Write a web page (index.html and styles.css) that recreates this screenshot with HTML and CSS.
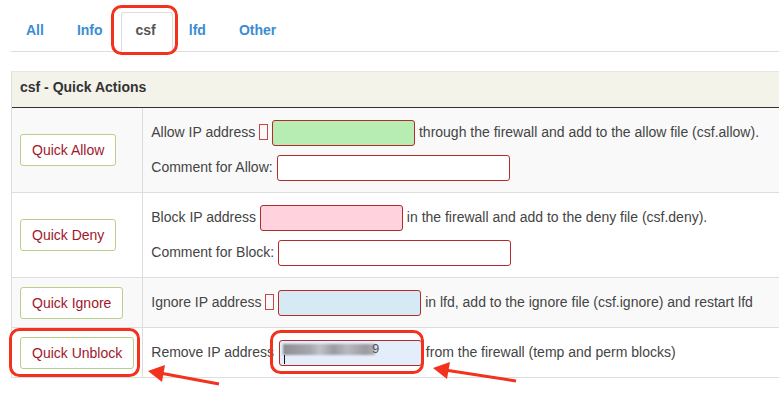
FILE: index.html
```html
<!DOCTYPE html>
<html lang="en">
<head>
	<meta charset="UTF-8"/>
	<title>csf - Quick Actions</title>
	<link rel="stylesheet" href="styles.css">
</head>
<body>
	<!-- Tab bar -->
	<ul class="tabs">
		<li><a href="#">All</a></li>
		<li><a href="#">Info</a></li>
		<li class="active"><a href="#">csf</a></li>
		<li><a href="#">lfd</a></li>
		<li><a href="#">Other</a></li>
	</ul>

	<div class="panel">
		<div class="panel-heading">csf - Quick Actions</div>
		<table class="actions">
			<tr>
				<td class="btn-cell"><button class="qbtn">Quick Allow</button></td>
				<td>
					<div class="line">Allow IP address <span class="tofu"></span> <input class="ip ip-allow" type="text"> through the firewall and add to the allow file (csf.allow).</div>
					<div class="line">Comment for Allow: <input class="comment" type="text"></div>
				</td>
			</tr>
			<tr>
				<td class="btn-cell"><button class="qbtn">Quick Deny</button></td>
				<td>
					<div class="line">Block IP address <input class="ip ip-deny" type="text"> in the firewall and add to the deny file (csf.deny).</div>
					<div class="line">Comment for Block: <input class="comment" type="text"></div>
				</td>
			</tr>
			<tr>
				<td class="btn-cell"><button class="qbtn">Quick Ignore</button></td>
				<td>
					<div class="line">Ignore IP address <span class="tofu"></span> <input class="ip ip-ignore" type="text"> in lfd, add to the ignore file (csf.ignore) and restart lfd</div>
				</td>
			</tr>
			<tr>
				<td class="btn-cell"><button class="qbtn">Quick Unblock</button></td>
				<td>
					<div class="line">Remove IP address<span class="ip ip-unblock"><span class="blurred"></span><span class="nine">9</span><span class="caret"></span></span> from the firewall (temp and perm blocks)</div>
				</td>
			</tr>
		</table>
	</div>

	<!-- Annotation layer (red marks drawn over the screenshot) -->
	<svg class="marks" width="779" height="394" viewBox="0 0 779 394">
		<g fill="none" stroke="#f2321c" stroke-width="3">
			<rect x="112.5" y="6.5" width="64" height="47" rx="9"/>
			<rect x="10.5" y="329.5" width="128" height="46" rx="9"/>
			<rect x="271.5" y="331.5" width="151" height="41" rx="9"/>
			<line x1="219" y1="384" x2="160" y2="373"/>
			<line x1="516" y1="381" x2="445" y2="370"/>
		</g>
		<g fill="#f2321c">
			<polygon points="148,371 165,365 162,382"/>
			<polygon points="433,368 450,362 447,379"/>
		</g>
	</svg>
</body>
</html>
```

FILE: styles.css
```css
	/* Page base */
	body {
		margin: 0;
		padding: 12px 0 0 11px;
		overflow: hidden;
		font-family: "Liberation Sans", Arial, sans-serif;
		font-size: 14px;
		color: #444;
		background: #fff;
	}
	/* Tab bar */
	.tabs {
		display: flex;
		list-style: none;
		margin: 0;
		padding: 0;
		border-bottom: 1px solid #ddd;
		width: 820px;
	}
	.tabs li {
		margin-right: 1px;
		margin-bottom: -1px;
	}
	.tabs a {
		display: block;
		padding: 8px 16px 11px 14px;
		line-height: 19px;
		font-weight: bold;
		font-size: 14px;
		color: #3a8dd4;
		text-decoration: none;
		border: 1px solid transparent;
		border-radius: 3px 3px 0 0;
	}
	.tabs li.active a {
		color: #555;
		background: #fff;
		border-color: #ddd #ddd transparent;
	}
	/* Panel with the quick actions */
	.panel {
		margin-top: 19px;
		width: 820px;
		border-left: 1px solid #ddd;
		border-top: 1px solid #e6e6e6;
	}
	.panel-heading {
		background: #f4f3ea;
		padding: 7px 8px 11px;
		font-weight: bold;
		font-size: 14px;
		line-height: 17px;
		color: #333;
		border-bottom: 1px solid #333;
	}
	.actions {
		width: 100%;
		border-collapse: collapse;
	}
	.actions tr:nth-child(odd) {
		background: #f9f9f9;
	}
	.actions td {
		padding: 12px 8px 11px;
		border-bottom: 1px solid #ddd;
		vertical-align: middle;
	}
	.actions td.btn-cell {
		width: 114px;
		padding: 8px;
		white-space: nowrap;
		border-right: 1px solid #ddd;
	}
	.qbtn {
		font-family: inherit;
		font-size: 14px;
		color: #a0182a;
		background: #fff;
		border: 1px solid #b8d08c;
		border-radius: 3px;
		padding: 0 11px;
		height: 32px;
		cursor: pointer;
	}
	/* One line of label + field + text */
	.line {
		line-height: 25px;
		height: 26px;
		white-space: nowrap;
	}
	.line + .line {
		margin-top: 9px;
	}
	.tofu {
		display: inline-block;
		width: 7px;
		height: 14px;
		border: 1px solid #c44;
		vertical-align: middle;
		margin-top: -2px;
	}
	.ip, .comment {
		display: inline-block;
		box-sizing: border-box;
		height: 26px;
		border: 1px solid #b22a2a;
		border-radius: 3px;
		background: #fff;
		vertical-align: top;
		margin: 0;
		padding: 0;
	}
	.ip { width: 143px; }
	.comment { width: 233px; }
	.ip-allow { background: #b7ecb3; }
	.ip-deny { background: #ffd2dd; }
	.ip-ignore { background: #d6eaf6; }
	.ip-unblock {
		position: relative;
		background: #e4eefb;
		margin-left: 5px;
		overflow: hidden;
	}
	/* Masked IP address */
	.blurred {
		position: absolute;
		left: 3px;
		top: 3px;
		width: 92px;
		height: 11px;
		background: linear-gradient(90deg, #8e8e93, #a7a7ad 30%, #c0c2c8 40%, #9a9ba0 55%, #b8b8be 70%, #9a9a9f 90%, #b0b0b4);
		filter: blur(1px);
	}
	.nine {
		position: absolute;
		left: 92px;
		top: -1px;
		font-size: 13px;
		line-height: 18px;
		color: #555;
	}
	.caret {
		position: absolute;
		left: 4px;
		top: 14px;
		width: 1px;
		height: 9px;
		background: #111;
	}
	/* Red annotation overlay */
	.marks {
		position: absolute;
		left: 0;
		top: 0;
		pointer-events: none;
	}
```
